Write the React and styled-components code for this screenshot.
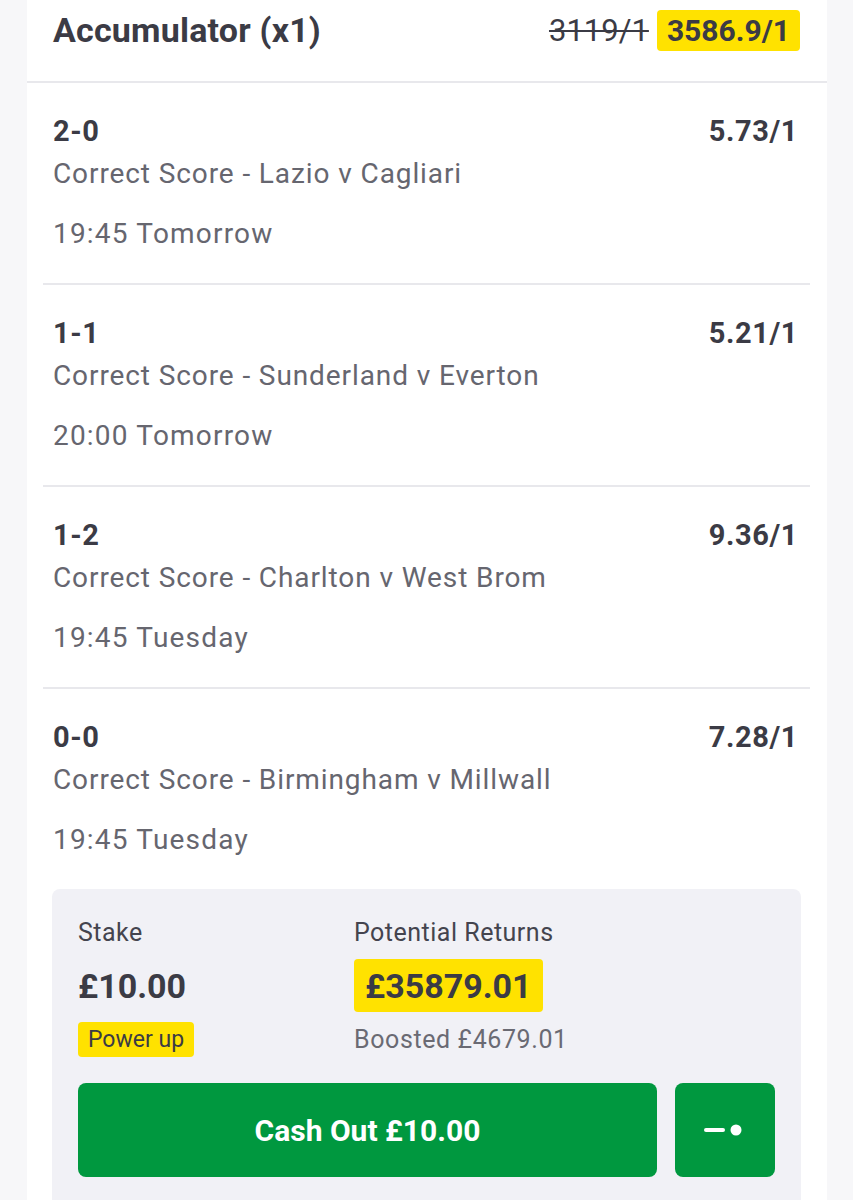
import React from "react";
import styled, { createGlobalStyle } from "styled-components";

const Global = createGlobalStyle`
  html, body { margin: 0; padding: 0; }
  body {
    background: #f7f7f9;
    font-family: Roboto, "Liberation Sans", sans-serif;
    color: #3b3b45;
    -webkit-font-smoothing: antialiased;
  }
`;

const Card = styled.div`
  margin: 0 26px 0 27px;
  background: #ffffff;
  min-height: 1200px;
`;

const Header = styled.div`
  display: flex;
  align-items: center;
  justify-content: space-between;
  height: 60px;
  padding: 0 27px 21px 26px;
  border-bottom: 2px solid #e8e8ec;
`;

const Title = styled.div`
  font-size: 34px;
  font-weight: 700;
  letter-spacing: 0.2px;
  color: #3b3b45;
`;

const OddsWrap = styled.div`
  display: flex;
  align-items: center;
  gap: 8px;
`;

const OldOdds = styled.span`
  font-size: 31px;
  font-weight: 400;
  text-decoration: line-through;
  text-decoration-thickness: 2px;
  color: #3b3b45;
`;

const Highlight = styled.span`
  display: inline-flex;
  align-items: center;
  background: #ffe200;
  border-radius: 4px;
  font-weight: ${(p) => (p.$bold ? 700 : 400)};
  font-size: ${(p) => p.$size}px;
  height: ${(p) => p.$h}px;
  padding: 0 ${(p) => p.$px}px;
  color: #3b3b45;
`;

const Legs = styled.div`
  margin: 0 17px 0 16px;
`;

const Leg = styled.div`
  padding: 30px 12px 30px 10px;
  border-bottom: 2px solid #e8e8ec;
  &:last-child {
    border-bottom: none;
  }
`;

const LegTop = styled.div`
  display: flex;
  justify-content: space-between;
  align-items: center;
  font-size: 29px;
  font-weight: 700;
  letter-spacing: 0.6px;
  line-height: 36px;
  color: #3b3b45;
`;

const Market = styled.div`
  margin-top: 6px;
  font-size: 28px;
  letter-spacing: 0.9px;
  line-height: 38px;
  color: #66666f;
`;

const Time = styled.div`
  margin-top: 22px;
  font-size: 28px;
  letter-spacing: 1.2px;
  line-height: 38px;
  color: #66666f;
`;

const Panel = styled.div`
  margin: 0 26px 0 25px;
  background: #f1f1f6;
  border-radius: 8px;
  padding: 30px 26px 40px 26px;
`;

const Grid = styled.div`
  display: grid;
  grid-template-columns: 276px 1fr;
`;

const Col = styled.div`
  display: flex;
  flex-direction: column;
  align-items: flex-start;
`;

const Label = styled.div`
  font-size: 25px;
  letter-spacing: 0.5px;
  line-height: 28px;
  color: #44444e;
`;

const Value = styled.div`
  margin-top: 12px;
  height: 53px;
  display: flex;
  align-items: center;
  font-size: 34px;
  font-weight: 700;
  color: #3b3b45;
`;

const ValueBadge = styled(Highlight)`
  margin-top: 12px;
`;

const Sub = styled.div`
  margin-top: 10px;
  height: 35px;
  display: flex;
  align-items: center;
  font-size: 25px;
  letter-spacing: 0.6px;
  color: #6a6a73;
`;

const SmallBadge = styled(Highlight)`
  margin-top: 10px;
`;

const Buttons = styled.div`
  display: flex;
  gap: 18px;
  margin-top: 26px;
`;

const GreenButton = styled.button`
  flex: ${(p) => (p.$grow ? "1" : "0 0 100px")};
  height: 94px;
  border: none;
  border-radius: 8px;
  background: #00983f;
  color: #ffffff;
  font-family: Roboto, "Liberation Sans", sans-serif;
  font-size: 30px;
  font-weight: 700;
  display: flex;
  align-items: center;
  justify-content: center;
  padding: 0;
`;

const legs = [
  { score: "2-0", odds: "5.73/1", market: "Correct Score - Lazio v Cagliari", time: "19:45 Tomorrow" },
  { score: "1-1", odds: "5.21/1", market: "Correct Score - Sunderland v Everton", time: "20:00 Tomorrow" },
  { score: "1-2", odds: "9.36/1", market: "Correct Score - Charlton v West Brom", time: "19:45 Tuesday" },
  { score: "0-0", odds: "7.28/1", market: "Correct Score - Birmingham v Millwall", time: "19:45 Tuesday" },
];

const SliderIcon = () => (
  <svg width="44" height="20" viewBox="0 0 44 20">
    <line x1="3" y1="10" x2="20" y2="10" stroke="#fff" strokeWidth="4" strokeLinecap="round" />
    <circle cx="33" cy="10" r="5.5" fill="#fff" />
  </svg>
);

export default function App() {
  return (
    <>
      <Global />
      <Card>
        <Header>
          <Title>Accumulator (x1)</Title>
          <OddsWrap>
            <OldOdds>3119/1</OldOdds>
            <Highlight $bold $size={30} $h={41} $px={10}>3586.9/1</Highlight>
          </OddsWrap>
        </Header>
        <Legs>
          {legs.map((l) => (
            <Leg key={l.market}>
              <LegTop>
                <span>{l.score}</span>
                <span>{l.odds}</span>
              </LegTop>
              <Market>{l.market}</Market>
              <Time>{l.time}</Time>
            </Leg>
          ))}
        </Legs>
        <Panel>
          <Grid>
            <Col>
              <Label>Stake</Label>
              <Value>£10.00</Value>
              <SmallBadge $size={23} $h={35} $px={10}>Power up</SmallBadge>
            </Col>
            <Col>
              <Label>Potential Returns</Label>
              <ValueBadge $bold $size={34} $h={53} $px={11}>£35879.01</ValueBadge>
              <Sub>Boosted £4679.01</Sub>
            </Col>
          </Grid>
          <Buttons>
            <GreenButton $grow>Cash Out £10.00</GreenButton>
            <GreenButton aria-label="slider">
              <SliderIcon />
            </GreenButton>
          </Buttons>
        </Panel>
      </Card>
    </>
  );
}
